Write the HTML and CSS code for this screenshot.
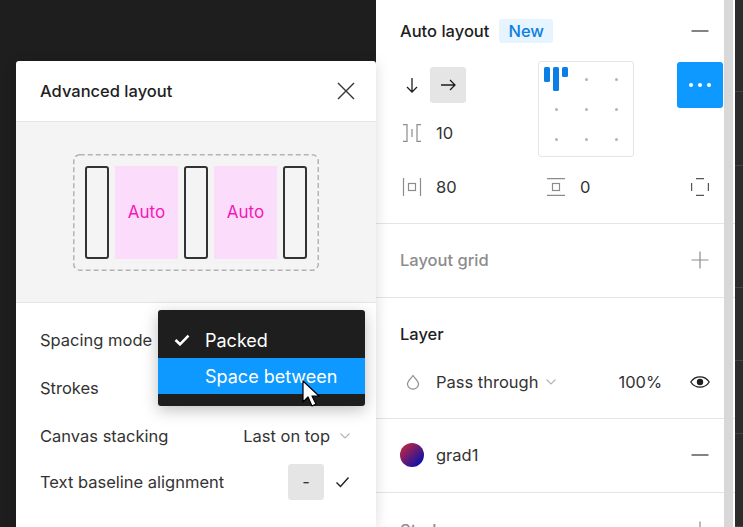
FILE: index.html
```html
<!DOCTYPE html>
<html lang="en">
<head>
    <meta charset="UTF-8">
    <title>Advanced layout</title>
    <link rel="stylesheet" href="styles.css">
</head>
<body>
    <div class="app">
        <div class="canvas"></div>

        <div class="panel">
            <section class="section auto-section">
                <div class="section-head">
                    <h2>Auto layout</h2>
                    <span class="new-tag">New</span>
                    <svg class="icon-end" width="18" height="18" viewBox="0 0 18 18"><path d="M0.5 9h17" stroke="#333" stroke-width="1.2"/></svg>
                </div>
                <div class="auto-grid">
                    <div class="direction">
                        <span class="dir-btn">
                            <svg width="16" height="18" viewBox="0 0 16 18"><path d="M8 2v14M3 11l5 5 5-5" fill="none" stroke="#1e1e1e" stroke-width="1.3"/></svg>
                        </span>
                        <span class="dir-btn active">
                            <svg width="18" height="16" viewBox="0 0 18 16"><path d="M2 8h14M11 3l5 5-5 5" fill="none" stroke="#1e1e1e" stroke-width="1.3"/></svg>
                        </span>
                    </div>
                    <div class="align-box">
                        <div class="cell bars"><i class="bar b1"></i><i class="bar b2"></i><i class="bar b3"></i></div>
                        <div class="cell"><i class="dot"></i></div>
                        <div class="cell"><i class="dot"></i></div>
                        <div class="cell"><i class="dot"></i></div>
                        <div class="cell"><i class="dot"></i></div>
                        <div class="cell"><i class="dot"></i></div>
                        <div class="cell"><i class="dot"></i></div>
                        <div class="cell"><i class="dot"></i></div>
                        <div class="cell"><i class="dot"></i></div>
                    </div>
                    <div class="more-cell">
                        <span class="more-btn"><i></i><i></i><i></i></span>
                    </div>
                    <div class="gap-row">
                        <svg class="field-icon" width="20" height="18" viewBox="0 0 20 18"><path d="M1 .6h4v16.800h-4M19 .6h-4v16.800h4M10 5v8" fill="none" stroke="#8c8c8c" stroke-width="1.200"/></svg>
                        <span>10</span>
                    </div>
                    <div class="pad-row">
                        <svg class="field-icon" width="20" height="18" viewBox="0 0 20 18"><path d="M1.500 0v18M18.500 0v18" stroke="#8c8c8c" stroke-width="1.200"/><rect x="6.500" y="5.500" width="7" height="7" fill="none" stroke="#8c8c8c" stroke-width="1.200"/></svg>
                        <span>80</span>
                    </div>
                    <div class="pad-v">
                        <svg width="18" height="18" viewBox="0 0 18 18"><path d="M0 .6h18M0 17.400h18" stroke="#8c8c8c" stroke-width="1.200"/><rect x="5.500" y="5.500" width="7" height="7" fill="none" stroke="#8c8c8c" stroke-width="1.200"/></svg>
                        <span>0</span>
                    </div>
                    <div class="pad-end">
                        <svg width="18" height="18" viewBox="0 0 18 18"><path d="M.6 5v8M17.400 5v8M5 .6h8M5 17.400h8" stroke="#555" stroke-width="1.200"/></svg>
                    </div>
                </div>
            </section>

            <section class="section grid-section">
                <h2 class="muted">Layout grid</h2>
                <svg class="icon-end" width="18" height="18" viewBox="0 0 18 18"><path d="M.5 9h17M9 .5v17" stroke="#8c8c8c" stroke-width="1.200"/></svg>
            </section>

            <section class="section layer-section">
                <h2>Layer</h2>
                <div class="layer-row">
                    <svg class="field-icon drop" width="14" height="16" viewBox="0 0 14 16"><path d="M7 1.500 C5 4.500 1.500 7 1.500 10 a5.500 5.200 0 0 0 11 0 C12.500 7 9 4.500 7 1.500z" fill="none" stroke="#8c8c8c" stroke-width="1.200"/></svg>
                    <span class="blend">Pass through</span>
                    <svg class="chev" width="10" height="6" viewBox="0 0 10 6"><path d="M.5.5 5 5 9.500.5" fill="none" stroke="#b3b3b3" stroke-width="1.100"/></svg>
                    <span class="percent">100%</span>
                    <svg class="eye" width="20" height="12" viewBox="0 0 20 12"><path d="M.8 6C3 2.600 6.200.8 10 .8s7 1.800 9.200 5.200C17 9.400 13.800 11.200 10 11.200S3 9.400.8 6z" fill="none" stroke="#1e1e1e" stroke-width="1.300"/><circle cx="10" cy="6" r="3.200" fill="#1e1e1e"/></svg>
                </div>
            </section>

            <section class="section fill-section">
                <span class="swatch"></span>
                <span>grad1</span>
                <svg class="icon-end" width="18" height="18" viewBox="0 0 18 18"><path d="M.5 9h17" stroke="#333" stroke-width="1.200"/></svg>
            </section>

            <section class="section stroke-section">
                <h2 class="muted">Stroke</h2>
                <svg class="icon-end" width="18" height="18" viewBox="0 0 18 18"><path d="M.5 9h17M9 .5v17" stroke="#8c8c8c" stroke-width="1.200"/></svg>
            </section>
        </div>

        <div class="scrollbar">
            <div class="gutter-row r1"></div>
            <div class="gutter-row r2"></div>
            <div class="gutter-row r3"></div>
            <div class="gutter-row r4"></div>
        </div>
        <div class="far-edge">
            <div class="far-row"></div>
            <div class="far-row"></div>
            <div class="far-row"></div>
            <div class="far-row"></div>
            <div class="far-row"></div>
            <div class="far-row"></div>
        </div>
    </div>

    <div class="modal">
        <div class="modal-head">
            <h1>Advanced layout</h1>
            <svg width="18" height="18" viewBox="0 0 18 18"><path d="M1 1l16 16M17 1 1 17" stroke="#333" stroke-width="1.400"/></svg>
        </div>
        <div class="preview">
            <div class="frame">
                <svg class="frame-dash" width="246" height="117" viewBox="0 0 246 117"><rect x=".75" y=".75" width="244.500" height="115.500" rx="6" fill="none" stroke="#b3b3b3" stroke-width="1.500" stroke-dasharray="5 3"/></svg>
                <div class="fixed"></div>
                <div class="auto">Auto</div>
                <div class="fixed"></div>
                <div class="auto">Auto</div>
                <div class="fixed"></div>
            </div>
        </div>
        <div class="options">
            <div class="option"><span>Spacing mode</span></div>
            <div class="option"><span>Strokes</span></div>
            <div class="option">
                <span>Canvas stacking</span>
                <span class="select">Last on top
                    <svg width="10" height="6" viewBox="0 0 10 6"><path d="M.5.5 5 5 9.500.5" fill="none" stroke="#b3b3b3" stroke-width="1.100"/></svg>
                </span>
            </div>
            <div class="option baseline-opt">
                <span>Text baseline alignment</span>
                <span class="toggle">
                    <span class="toggle-btn">-</span>
                    <svg width="15" height="12" viewBox="0 0 15 12"><path d="M1.500 6.500 5.500 10.500 13.500 1.500" fill="none" stroke="#1e1e1e" stroke-width="1.400"/></svg>
                </span>
            </div>
        </div>
    </div>

    <div class="menu">
        <div class="menu-item">
            <svg width="16" height="12" viewBox="0 0 16 12"><path d="M1.500 6 6 10.300 14.500 1.700" fill="none" stroke="#fff" stroke-width="2.600"/></svg>
            <span>Packed</span>
        </div>
        <div class="menu-item selected">
            <span>Space between</span>
        </div>
    </div>

    <svg class="cursor" width="20" height="28" viewBox="0 0 20 28"><path d="M1 1v21l5-5 4 9 4-2-4-8h7z" fill="#fff" stroke="#000" stroke-width="1.200" stroke-linejoin="round"/></svg>
</body>
</html>
```

FILE: styles.css
```css
* {
    box-sizing: border-box;
}

body {
    margin: 0;
    width: 743px;
    height: 527px;
    overflow: hidden;
    background-color: #1e1e1e;
    font-family: Inter, "Noto Sans", sans-serif;
    font-size: 16.500px;
    color: #333;
}

h1, h2 {
    margin: 0;
    font-size: 16.500px;
    font-weight: 500;
    color: #1e1e1e;
}

svg {
    display: block;
    flex: none;
}

.app {
    display: flex;
    height: 527px;
}

.canvas {
    width: 376px;
}

.panel {
    width: 348px;
    height: 527px;
    overflow: hidden;
    background-color: #fff;
}

/* scrollbar and the white gap beside it, section lines run through both */
.scrollbar {
    width: 11px;
    background-color: #fff;
    border-left: 9px solid #d8d8d8;
}

.gutter-row {
    border-bottom: 1px solid #e5e5e5;
}

.r1 { height: 224px; }
.r2 { height: 74px; }
.r3 { height: 121px; }
.r4 { height: 74px; }

.far-edge {
    display: grid;
    grid-template-rows: 92px 74px 122px 73px 73px 1fr;
    width: 8px;
    background-color: #2c2c2c;
}

.far-row {
    border-bottom: 1px solid #444;
}

.section {
    border-bottom: 1px solid #e5e5e5;
    padding-left: 24px;
    padding-right: 15px;
}

.icon-end {
    margin-left: auto;
}

.muted {
    color: #8c8c8c;
}

/* auto layout */
.auto-section {
    height: 224px;
    padding-right: 1px;
}

.section-head {
    display: flex;
    align-items: center;
    height: 61px;
    padding-right: 14px;
}

.new-tag {
    margin-left: 10px;
    padding: 0 9px;
    height: 24px;
    line-height: 24px;
    border-radius: 3px;
    background-color: #e5f4ff;
    color: #0d7fe0;
    font-weight: 500;
}

.auto-grid {
    display: grid;
    grid-template-columns: 36px 102px 96px 1fr;
    grid-template-rows: 47px 49px 60px;
    color: #333;
}

.direction {
    display: flex;
    grid-column: 1 / 3;
    margin-left: -6px;
    padding-top: 6px;
}

.dir-btn {
    display: flex;
    align-items: center;
    justify-content: center;
    width: 36px;
    height: 36px;
    border-radius: 3px;
}

.dir-btn.active {
    background-color: #e5e5e5;
}

.align-box {
    grid-column: 3;
    grid-row: 1 / 3;
    display: grid;
    grid-template-columns: repeat(3, 30px);
    grid-template-rows: repeat(3, 30px);
    width: 96px;
    height: 96px;
    padding: 2px;
    border: 1px solid #e5e5e5;
    border-radius: 3px;
}

.cell {
    display: flex;
    align-items: center;
    justify-content: center;
}

.dot {
    width: 3px;
    height: 3px;
    border-radius: 50%;
    background-color: #b3b3b3;
}

.bars {
    align-items: flex-start;
    gap: 3px;
    padding-top: 3px;
}

.bar {
    width: 6px;
    border-radius: 1.500px;
    background-color: #0b7fe6;
}

.b1 { height: 15px; }
.b2 { height: 24px; }
.b3 { height: 10px; }

.more-cell {
    grid-column: 4;
    grid-row: 1;
    padding-left: 43px;
    padding-top: 1px;
}

.more-btn {
    display: flex;
    align-items: center;
    justify-content: center;
    gap: 5px;
    width: 46px;
    height: 46px;
    padding-bottom: 1px;
    border-radius: 3px;
    background-color: #0d99ff;
}

.more-btn i {
    width: 4px;
    height: 4px;
    border-radius: 50%;
    background-color: #fff;
}

.gap-row {
    grid-column: 1 / 3;
    grid-row: 2;
    display: flex;
    align-items: center;
    margin-top: 1px;
}

.pad-row {
    grid-column: 1 / 3;
    grid-row: 3;
    display: flex;
    align-items: center;
}

.field-icon {
    width: 20px;
    margin-left: 2px;
    margin-right: 14px;
}

.pad-v {
    grid-column: 3;
    grid-row: 3;
    display: flex;
    align-items: center;
    gap: 15px;
    padding-left: 9px;
}

.pad-end {
    grid-column: 4;
    grid-row: 3;
    display: flex;
    align-items: center;
    justify-content: flex-end;
    padding-right: 14px;
}

/* other sections */
.grid-section {
    display: flex;
    align-items: center;
    height: 74px;
    padding-bottom: 2px;
}

.layer-section {
    height: 121px;
    padding-top: 26px;
}

.layer-row {
    display: flex;
    align-items: center;
    height: 24px;
    margin-top: 26px;
    white-space: nowrap;
}

.drop {
    width: 14px;
    margin-left: 6px;
    margin-right: 16px;
}

.chev {
    margin-left: 8px;
}

.percent {
    margin-left: 62px;
}

.eye {
    margin-left: 28px;
    margin-right: -1px;
}

.fill-section {
    display: flex;
    align-items: center;
    height: 74px;
    gap: 12px;
    padding-bottom: 1px;
}

.swatch {
    width: 24px;
    height: 24px;
    border-radius: 50%;
    background: linear-gradient(135deg, #a8224f 20%, #1a14a0 80%);
}

.stroke-section {
    display: flex;
    align-items: center;
    height: 74px;
    border-bottom: 0;
}

/* modal */
.modal {
    position: absolute;
    left: 16px;
    top: 61px;
    width: 360px;
    height: 466px;
    background-color: #fff;
    border-radius: 3px 3px 0 0;
    box-shadow: 0 2px 14px rgba(0, 0, 0, 0.15);
}

.modal-head {
    display: flex;
    align-items: center;
    justify-content: space-between;
    height: 61px;
    padding: 0 21px 0 24px;
    border-bottom: 1px solid #e5e5e5;
}

.preview {
    display: flex;
    justify-content: center;
    align-items: center;
    height: 181px;
    background-color: #f4f4f4;
    border-bottom: 1px solid #e5e5e5;
}

.frame {
    position: relative;
    display: flex;
    gap: 6px;
    width: 246px;
    height: 117px;
    padding: 12px;
}

.frame-dash {
    position: absolute;
    left: 0;
    top: 0;
}

.fixed {
    width: 24px;
    border: 2px solid #333;
    border-radius: 3px;
}

.auto {
    display: flex;
    align-items: center;
    justify-content: center;
    width: 63px;
    background-color: #fcdcfb;
    color: #f318b8;
    font-size: 17px;
}

.options {
    padding: 13px 24px 0;
}

.option {
    display: flex;
    align-items: center;
    justify-content: space-between;
    height: 48px;
}

.baseline-opt {
    height: 44px;
}

.select {
    display: flex;
    align-items: center;
    gap: 10px;
    padding-right: 2px;
}

.toggle {
    display: flex;
    align-items: center;
    gap: 11px;
    padding-right: 2px;
}

.toggle-btn {
    display: flex;
    align-items: center;
    justify-content: center;
    width: 36px;
    height: 36px;
    border-radius: 3px;
    background-color: #e5e5e5;
}

/* dropdown over the modal */
.menu {
    position: absolute;
    left: 158px;
    top: 310px;
    width: 207px;
    padding: 12px 0;
    border-radius: 3px;
    background-color: #1e1e1e;
    color: #fff;
    font-size: 18px;
    box-shadow: 0 4px 16px rgba(0, 0, 0, 0.25);
}

.menu-item {
    display: flex;
    align-items: center;
    gap: 15px;
    height: 36px;
    padding-left: 16px;
}

.menu-item.selected {
    padding-left: 47px;
    background-color: #0d99ff;
}

.cursor {
    position: absolute;
    left: 302px;
    top: 380px;
}
```
